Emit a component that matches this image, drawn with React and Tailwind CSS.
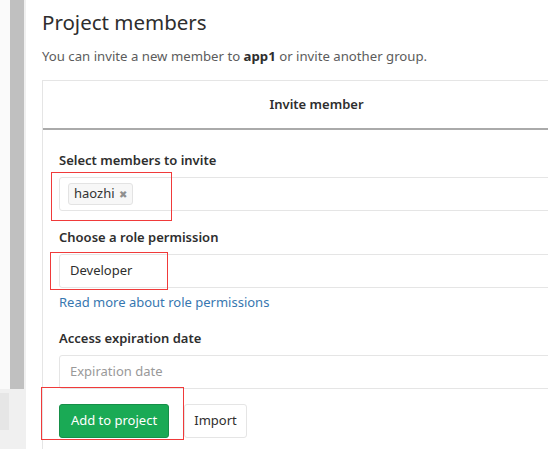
export default function App() {
  return (
    <div
      className="relative flex h-[449px] w-[548px] overflow-hidden bg-white text-[#2e2e2e]"
      style={{ fontFamily: '"Noto Sans", "Open Sans", sans-serif' }}
    >
      {/* left sidebar strip */}
      <div className="flex w-[26px] shrink-0 flex-col bg-[#f0f0f0]">
        <div className="flex h-[389px]">
          <div className="w-[10px] bg-[#fafafa]" />
          <div className="w-[14px] bg-[#c0c0c0]" />
        </div>
        <div className="mt-[4px] h-[37px] w-[9px] bg-[#e6e6e6]" />
      </div>

      <div className="ml-[16px] flex w-[548px] shrink-0 flex-col">
        <h1 className="mt-[8px] text-[20.5px] leading-[28px] text-[#2e2e2e]">Project members</h1>
        <p className="mt-[10px] text-[13.2px] leading-[20px] text-[#5c5c5c]">
          You can invite a new member to <strong className="text-[#2e2e2e]">app1</strong> or invite another group.
        </p>

        <div className="mt-[14px] flex-1 border-l border-t border-[#e5e5e5]">
          <div className="flex h-[49px] items-center justify-center border-b-2 border-[#aaaaaa] text-[13px] font-semibold">
            Invite member
          </div>

          <div className="px-[16px] pt-[20px]">
            <label className="block text-[13px] font-semibold leading-[20px]">Select members to invite</label>
            <div className="mt-[7px] flex h-[34px] items-center rounded-[3px] border border-[#e5e5e5] px-[8px]">
              <span className="flex h-[22px] items-center gap-[4px] rounded-[3px] border border-[#e3e3e3] bg-[#f7f7f7] px-[5px] text-[13px] text-[#333]">
                haozhi
                <span className="text-[10px] leading-none text-[#8f8f8f]">✖</span>
              </span>
            </div>

            <label className="mt-[16px] block text-[13px] font-semibold leading-[20px]">Choose a role permission</label>
            <div className="mt-[7px] flex h-[34px] items-center rounded-[3px] border border-[#e5e5e5] px-[10px] text-[13px] text-[#2e2e2e]">
              Developer
            </div>
            <a className="mt-[4px] block text-[13px] leading-[20px] text-[#3777b0]">Read more about role permissions</a>

            <label className="mt-[16px] block text-[13px] font-semibold leading-[20px]">Access expiration date</label>
            <div className="mt-[7px] flex h-[34px] items-center rounded-[3px] border border-[#e5e5e5] px-[10px] text-[13px] text-[#999]">
              Expiration date
            </div>

            <div className="mt-[15px] flex gap-[15px]">
              <button className="h-[34px] w-[110px] rounded-[3px] border border-[#168f48] bg-[#1aaa55] text-[13px] text-white">
                Add to project
              </button>
              <button className="h-[34px] w-[63px] rounded-[3px] border border-[#e5e5e5] bg-white text-[13px] text-[#2e2e2e]">
                Import
              </button>
            </div>
          </div>
        </div>
      </div>

      {/* red annotation boxes */}
      <div className="absolute left-[51px] top-[172px] h-[49px] w-[121px] border border-[#f03a3a]" />
      <div className="absolute left-[50px] top-[252px] h-[38px] w-[118px] border border-[#f03a3a]" />
      <div className="absolute left-[41px] top-[387px] h-[53px] w-[143px] border border-[#f03a3a]" />
    </div>
  );
}
